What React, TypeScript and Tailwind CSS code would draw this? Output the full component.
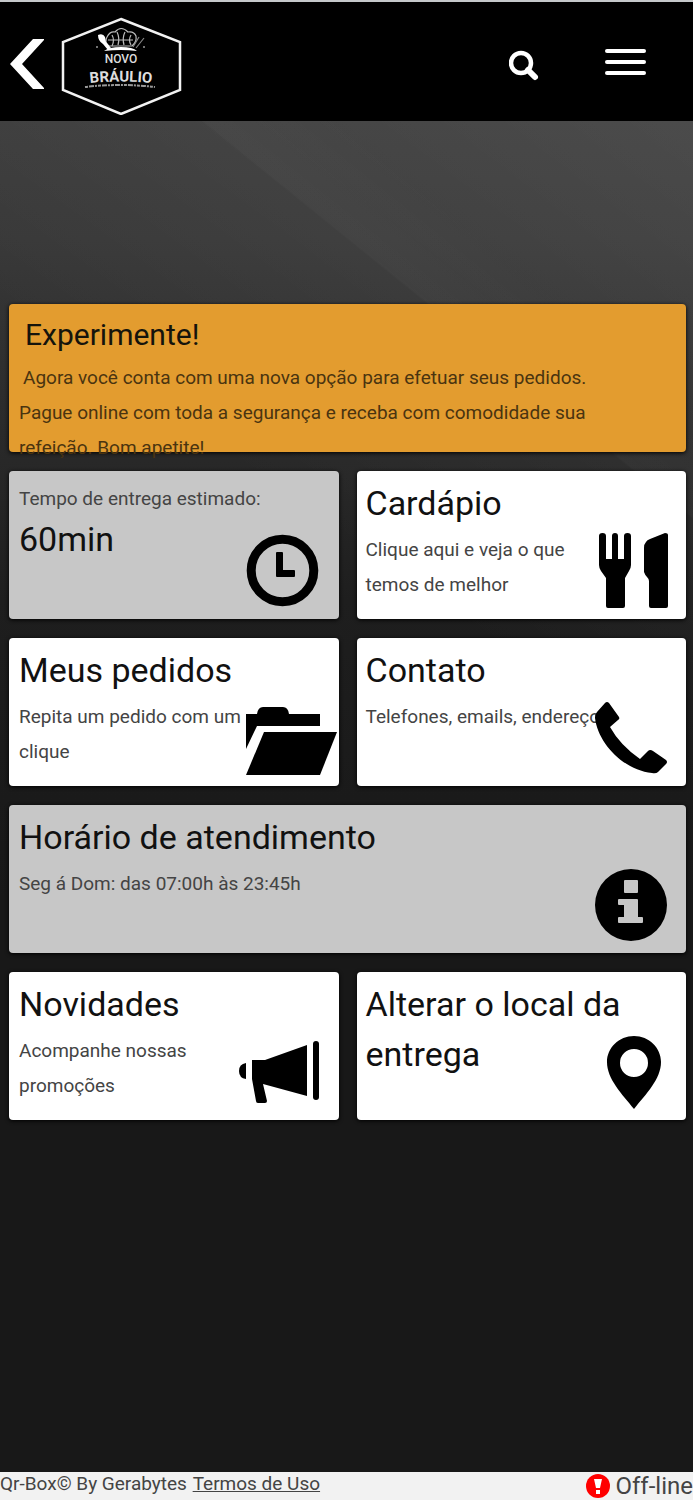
import { ReactNode } from "react";

const iconClass = "absolute right-0 bottom-2 h-20 w-[104px]";

function ClockIcon() {
  return (
    <svg className={iconClass} viewBox="0 0 104 80" aria-hidden="true">
      <circle cx="47.5" cy="39.5" r="31.3" fill="none" stroke="#000" strokeWidth="9" />
      <path d="M42 21h5q1 0 1 1v17h11q1 0 1 1v5q0 1-1 1H42q-1 0-1-1V22q0-1 1-1z" />
    </svg>
  );
}

function CutleryIcon() {
  return (
    <svg className={iconClass} viewBox="0 0 104 80" aria-hidden="true">
      <path d="M17 5q0-3 3.500-3T24 5v23h6V5q0-3 3-3t3 3v23h6V5q0-3 3.500-3T49 5v29q0 3-2 6l-4 7v28q0 2-2 2H26q-2 0-2-2V47l-5-7q-2-3-2-6z" />
      <path d="M64 11q1-2 4-3l15-6q3 0 3 2v71q0 2-2 2H69q-2 0-2-2V50q0-2-2-4t-3-5V17q0-4 2-6z" />
    </svg>
  );
}

function FolderIcon() {
  return (
    <svg className={iconClass} viewBox="0 0 104 80" aria-hidden="true">
      <path d="M11 16h11q1-7 6-7h20q5 0 6 7h31v12H22L11 51z" />
      <path d="M29 34h73L85 77H11z" />
    </svg>
  );
}

function PhoneIcon() {
  return (
    <svg className={iconClass} viewBox="0 0 104 80" aria-hidden="true">
      <path d="M23 5q2-2 4 0l10 14q1 2-1 3l-8 7q10 18 30 32l8-8q2-2 5 0l13 9q2 2 0 4l-8 8q-2 2-6 1C41 72 16 45 13 20q0-4 2-6z" />
    </svg>
  );
}

function InfoIcon() {
  return (
    <svg className={iconClass} viewBox="0 0 104 80" aria-hidden="true">
      <path
        fillRule="evenodd"
        d="M49 4a36 36 0 1 1 0 72a36 36 0 1 1 0-72zM43 15q-1 0-1 1v11q0 1 1 1h12q1 0 1-1V16q0-1-1-1zM37 34q-1 0-1 1v4q0 1 1 1h5v12h-5q-1 0-1 1v4q0 1 1 1h23q1 0 1-1v-4q0-1-1-1h-4V35q0-1-1-1z"
      />
    </svg>
  );
}

function MegaphoneIcon() {
  return (
    <svg className={iconClass} viewBox="0 0 104 80" aria-hidden="true">
      <path d="M11 31v16q-7-1-7-8t7-8z" />
      <path d="M17 28h13l42-15v51L28 52l4 17q0 2-2 2h-7q-2 0-2-2l-4-22z" />
      <rect x="78" y="9" width="6" height="59" rx="3" />
    </svg>
  );
}

function PinIcon() {
  return (
    <svg className={iconClass} viewBox="0 0 104 80" aria-hidden="true">
      <path
        fillRule="evenodd"
        d="M52 4c15 0 27 12 27 26c0 17-15 32-27 47C40 62 25 47 25 30C25 16 37 4 52 4zM52 17a14 14 0 1 0 0 28a14 14 0 1 0 0-28z"
      />
    </svg>
  );
}

function Logo() {
  return (
    <svg className="h-[98px] w-[122px]" viewBox="0 0 122 98" role="img" aria-label="Novo Bráulio">
      <path d="M60 2l59 23v48L60 97L2 73V25z" fill="none" stroke="#f2f2f2" strokeWidth="2.5" />
      <g fill="none" stroke="#bbb" strokeWidth="1.2">
        <path d="M48 29q-5-4-2-9 3-6 8-5 6-7 13 0 6-1 8 4 1 6-4 10z" />
        <path d="M51 18q3 5 0 11M56 15q3 6 1 13M64 15q-3 6-1 13M70 18q-3 5 0 10M47 23h25" />
        <path d="M72 30l6-10M75 31l8-10" stroke="#888" />
      </g>
      <path d="M37 18q5-2 7 2l1 5 5 6-3 2-5-6q-5-3-5-9z" fill="#fff" />
      <path d="M43 34q5-4 17-4t16 4q-16-2-33 0z" fill="#fff" />
      <circle cx="36" cy="30" r="1" fill="#999" />
      <circle cx="83" cy="30" r="1" fill="#999" />
      <path id="logo-curve" d="M22 67q38-5 76 0" fill="none" />
      <text x="60" y="46" textAnchor="middle" fontFamily="Roboto, sans-serif" fontSize="12" fontWeight="500" fill="#ddd">
        NOVO
      </text>
      <text fontFamily="Roboto, sans-serif" fontSize="15" fontWeight="700" fill="#ddd">
        <textPath href="#logo-curve" startOffset="50%" textAnchor="middle">
          BRÁULIO
        </textPath>
      </text>
      <path d="M24 70q35-4 70 0" fill="none" stroke="#999" strokeWidth="2" strokeDasharray="3 1 5 1 2 1" />
    </svg>
  );
}

type CardProps = {
  title: string;
  text?: string;
  icon: ReactNode;
  href?: string;
  className?: string;
};

function Card({ title, text, icon, href, className = "pl-[9px]" }: CardProps) {
  const classes = `relative block h-[148px] rounded-sm pt-[7px] shadow-[0_1px_4px_#000] ${className}`;
  const content = (
    <>
      <h2 className="text-[34px] leading-[50px] text-[#111]">{title}</h2>
      {text && (
        <p className="mt-1 pr-20 text-[19px] leading-[35px] whitespace-pre-line text-[#444]">{text}</p>
      )}
      {icon}
    </>
  );

  if (href) {
    return (
      <a href={href} className={`${classes} bg-white`}>
        {content}
      </a>
    );
  }
  return <section className={`${classes} bg-[#c7c7c7]`}>{content}</section>;
}

export default function App() {
  return (
    <div className="flex min-h-screen flex-col bg-[#181818] bg-[linear-gradient(39deg,#ffffff00_1198px,#ffffff06_1200px,#ffffff00_1290px),linear-gradient(215deg,#ffffff18_0%,#ffffff00_40%),linear-gradient(180deg,#404040_0px,#383838_240px,#1e1e1e_600px,#181818_900px,#181818_100%)] font-[Roboto,sans-serif]">
      <header className="flex h-[121px] items-center border-t-2 border-[#c5c8ca] bg-black pt-2 pr-[47px] pl-[9px]">
        <button type="button" aria-label="Voltar" className="mb-1">
          <svg className="h-[52px] w-9" viewBox="0 0 36 52" aria-hidden="true">
            <path d="M24 1h11v1L13 26l22 24v1H24L1 26z" fill="#fff" />
          </svg>
        </button>
        <a href="#inicio" className="ml-4">
          <Logo />
        </a>
        <button type="button" aria-label="Buscar" className="ml-auto">
          <svg className="h-8 w-8" viewBox="0 0 32 32" fill="none" stroke="#fff" aria-hidden="true">
            <circle cx="12" cy="13" r="10" strokeWidth="4.5" />
            <path d="M19 20l7 7" strokeWidth="6" strokeLinecap="round" />
          </svg>
        </button>
        <button type="button" aria-label="Menu" className="mb-2 ml-16 flex w-[41px] flex-col gap-[7px]">
          <span className="h-1 w-full rounded-xs bg-white" />
          <span className="h-1 w-full rounded-xs bg-white" />
          <span className="h-1 w-full rounded-xs bg-white" />
        </button>
      </header>

      <main className="mt-[183px] mb-auto grid grid-cols-2 gap-x-[18px] gap-y-[19px] pr-[7px] pl-[9px]">
        <section className="col-span-2 h-[148px] rounded-sm bg-[#e39c2f] pt-1.5 pl-2.5 shadow-[0_1px_4px_#000]">
          <h2 className="pl-1.5 text-[30px] leading-[50px] text-[#15140c]">Experimente!</h2>
          <p className="pr-20 indent-1 text-[19px] leading-[35px] text-[#4a3410]">
            Agora você conta com uma nova opção para efetuar seus pedidos. Pague online com toda a
            segurança e receba com comodidade sua refeição. Bom apetite!
          </p>
        </section>

        <section className="relative h-[148px] rounded-sm bg-[#c7c7c7] pt-2.5 pl-2.5 shadow-[0_1px_4px_#000]">
          <p className="text-[19px] leading-[35px] text-[#444]">Tempo de entrega estimado:</p>
          <p className="text-[34px] leading-[46px] text-[#111]">60min</p>
          <ClockIcon />
        </section>
        <Card title="Cardápio" text={"Clique aqui e veja o que\ntemos de melhor"} href="#cardapio" icon={<CutleryIcon />} />
        <Card
          title="Meus pedidos"
          text="Repita um pedido com um clique"
          href="#pedidos"
          className="pl-2.5"
          icon={<FolderIcon />}
        />
        <Card title="Contato" text="Telefones, emails, endereço" href="#contato" icon={<PhoneIcon />} />
        <Card
          title="Horário de atendimento"
          text="Seg á Dom: das 07:00h às 23:45h"
          className="col-span-2 pl-2.5"
          icon={<InfoIcon />}
        />
        <Card
          title="Novidades"
          text={"Acompanhe nossas\npromoções"}
          href="#novidades"
          className="pl-2.5"
          icon={<MegaphoneIcon />}
        />
        <Card title="Alterar o local da entrega" href="#local" icon={<PinIcon />} />
      </main>

      <footer className="flex h-7 justify-between bg-[#f2f2f2] text-[#444]">
        <p className="text-[19px] leading-6">
          Qr-Box© By Gerabytes{" "}
          <a href="#termos" className="ml-px underline">
            Termos de Uso
          </a>
        </p>
        <p className="flex items-center gap-1.5 text-2xl">
          <svg className="h-6 w-6" viewBox="0 0 24 24" aria-hidden="true">
            <circle cx="12" cy="12" r="12" fill="#f00" />
            <path d="M8 5h8l-2 9h-4zM10 16h4v4h-4z" fill="#fff" />
          </svg>
          Off-line
        </p>
      </footer>
    </div>
  );
}
